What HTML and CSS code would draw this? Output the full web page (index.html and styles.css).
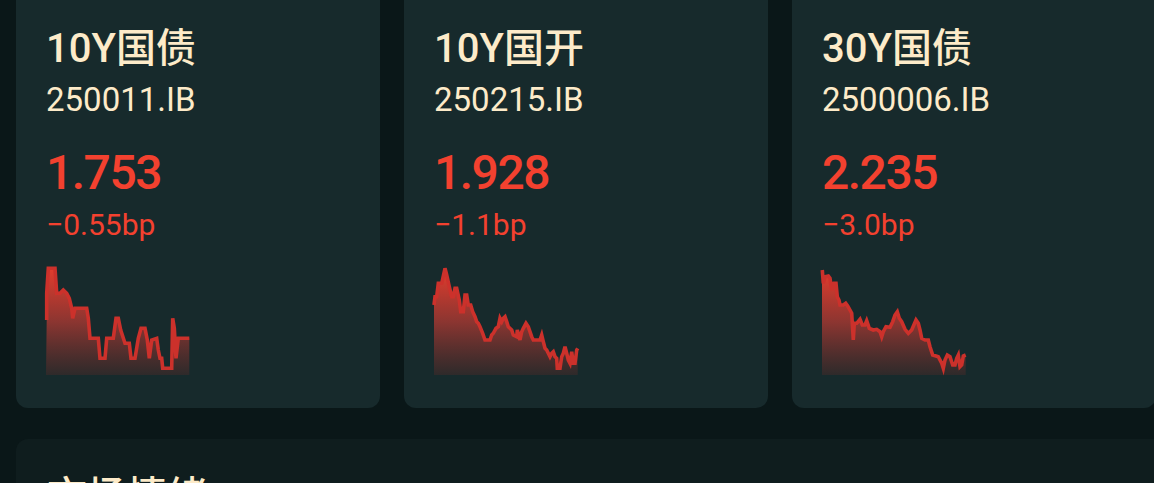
FILE: index.html
```html
<!DOCTYPE html>
<html lang="zh-CN">
<head>
<meta charset="utf-8">
<title>债券行情</title>
<link rel="stylesheet" href="styles.css">
</head>
<body>
<main class="page">
  <section class="quotes">
    <article class="card">
      <h2 class="card-title">10Y国债</h2>
      <div class="card-code">250011.IB</div>
      <div class="card-value">1.753</div>
      <div class="card-change">−0.55bp</div>
      <svg class="spark" width="144" height="110" viewBox="0 0 144 110">
        <defs>
          <linearGradient id="g1" x1="0" y1="0" x2="0" y2="1">
            <stop offset="0" stop-color="#e33c2d" stop-opacity="1"/>
            <stop offset="0.5" stop-color="#923631" stop-opacity="0.95"/>
            <stop offset="1" stop-color="#342a2a" stop-opacity="0.8"/>
          </linearGradient>
        </defs>
        <path fill="url(#g1)" d="M0.7,55 L0.7,28.3 2.3,3.3 9,3.3 10.7,28.3 14,28.3 17.3,25 20.7,28.3 23.3,33.3 25.7,43.3 26.7,53.3 29,43.3 40.7,43.3 42.3,53.3 44,73.3 52.3,73.3 54,93.3 59,93.3 60.7,73.3 67.3,73.3 70,53.3 72.3,53.3 74.7,65 79,78.3 83.3,78.3 85,93.3 89,93.3 92.3,73.3 95,63.3 99,63.3 101.3,75 103.3,93.3 105.7,75 110.7,73.3 112.3,85 114,93.3 115.7,93.3 116.7,103.3 125.7,103.3 126.7,53.3 128.3,63.3 130,93.3 132.3,73.3 143.3,73.3 143.3,85 L143.3,110 L0,110 Z"/>
        <polyline fill="none" stroke="#cc312b" stroke-width="3.6" points="0.7,55 0.7,28.3 2.3,3.3 9,3.3 10.7,28.3 14,28.3 17.3,25 20.7,28.3 23.3,33.3 25.7,43.3 26.7,53.3 29,43.3 40.7,43.3 42.3,53.3 44,73.3 52.3,73.3 54,93.3 59,93.3 60.7,73.3 67.3,73.3 70,53.3 72.3,53.3 74.7,65 79,78.3 83.3,78.3 85,93.3 89,93.3 92.3,73.3 95,63.3 99,63.3 101.3,75 103.3,93.3 105.7,75 110.7,73.3 112.3,85 114,93.3 115.7,93.3 116.7,103.3 125.7,103.3 126.7,53.3 128.3,63.3 130,93.3 132.3,73.3 143.3,73.3"/>
      </svg>
    </article>
    <article class="card">
      <h2 class="card-title">10Y国开</h2>
      <div class="card-code">250215.IB</div>
      <div class="card-value">1.928</div>
      <div class="card-change">−1.1bp</div>
      <svg class="spark" width="144" height="110" viewBox="0 0 144 110">
        <defs>
          <linearGradient id="g2" x1="0" y1="0" x2="0" y2="1">
            <stop offset="0" stop-color="#e33c2d" stop-opacity="1"/>
            <stop offset="0.5" stop-color="#923631" stop-opacity="0.95"/>
            <stop offset="1" stop-color="#342a2a" stop-opacity="0.8"/>
          </linearGradient>
        </defs>
        <path fill="url(#g2)" d="M0,40 L1,31.7 2.7,31.7 4.3,18.3 7.7,18.3 11,3.3 12.7,10 15.3,21.7 17.7,31.7 19.3,31.7 21,23.3 22.7,23.3 25.3,35 26.7,46.7 29.3,46.7 31,30 32.7,30 34.3,40 36.7,40 38.7,46.7 41,51.7 42.7,56.7 44.3,58.3 46,61.7 48.7,68.3 51,75 56,75 57.7,70 59.3,68.3 62,63.3 64.3,61.7 66,53.3 67.7,56.7 69.3,53.3 71,51.7 72.7,56.7 74.3,61.7 77.7,65 79.3,70 82.7,71.7 83.3,65 86,75 87.7,66.7 89.3,63.3 92,58.3 94.3,61.7 97.7,71.7 99.3,75 106,75 107.7,70 109.3,76.7 111,83.3 112.7,85 114.3,88.3 116,91.7 117.7,88.3 119.3,86.7 121,91.7 122.7,93.3 123.3,103.3 126,103.3 127.7,91.7 129.3,88.3 131,81.7 132.7,88.3 134.3,95 136,98.3 137.7,86.7 139.3,98.3 141,98.3 142.7,85 143.7,83.3 L143.7,110 L0,110 Z"/>
        <polyline fill="none" stroke="#cc312b" stroke-width="3.6" points="0,40 1,31.7 2.7,31.7 4.3,18.3 7.7,18.3 11,3.3 12.7,10 15.3,21.7 17.7,31.7 19.3,31.7 21,23.3 22.7,23.3 25.3,35 26.7,46.7 29.3,46.7 31,30 32.7,30 34.3,40 36.7,40 38.7,46.7 41,51.7 42.7,56.7 44.3,58.3 46,61.7 48.7,68.3 51,75 56,75 57.7,70 59.3,68.3 62,63.3 64.3,61.7 66,53.3 67.7,56.7 69.3,53.3 71,51.7 72.7,56.7 74.3,61.7 77.7,65 79.3,70 82.7,71.7 83.3,65 86,75 87.7,66.7 89.3,63.3 92,58.3 94.3,61.7 97.7,71.7 99.3,75 106,75 107.7,70 109.3,76.7 111,83.3 112.7,85 114.3,88.3 116,91.7 117.7,88.3 119.3,86.7 121,91.7 122.7,93.3 123.3,103.3 126,103.3 127.7,91.7 129.3,88.3 131,81.7 132.7,88.3 134.3,95 136,98.3 137.7,86.7 139.3,98.3 141,98.3 142.7,85 143.7,83.3"/>
      </svg>
    </article>
    <article class="card">
      <h2 class="card-title">30Y国债</h2>
      <div class="card-code">2500006.IB</div>
      <div class="card-value">2.235</div>
      <div class="card-change">−3.0bp</div>
      <svg class="spark" width="144" height="110" viewBox="0 0 144 110">
        <defs>
          <linearGradient id="g3" x1="0" y1="0" x2="0" y2="1">
            <stop offset="0" stop-color="#e33c2d" stop-opacity="1"/>
            <stop offset="0.5" stop-color="#923631" stop-opacity="0.95"/>
            <stop offset="1" stop-color="#342a2a" stop-opacity="0.8"/>
          </linearGradient>
        </defs>
        <path fill="url(#g3)" d="M0.3,5 L1.3,18.3 3,11.7 6.3,11 8,13.3 9.7,25 12,18.3 14,18.3 15.3,31.7 17,35 18,40 21.3,40 23.7,38.3 25.7,41 28,45 29.7,48.3 31.3,75 32.3,58.3 34.7,58.3 38,54.3 40.3,60 43,60 44.7,55.7 47.3,63.3 51.3,65 54.7,64.3 58,66.7 59.7,71.7 61.3,66.7 64,61.7 68,62.3 70.7,56.7 73,50 75.3,46.7 77.3,53.3 79.7,56.7 83,64.3 86.3,68.3 89.7,65 94,55 96.3,58.3 98,65 99.7,73.3 103,75 106.3,75 108,81.7 110.7,90 114,91 116.3,91.7 119.7,98.3 121.3,103.3 123,95 125.3,90 128,91.7 130.7,100 133,100 134.7,93.3 136.3,90 138,101.7 139.7,100 141.3,91 143.7,90 L143.7,110 L0,110 L0,5 Z"/>
        <polyline fill="none" stroke="#cc312b" stroke-width="3.6" points="0.3,5 1.3,18.3 3,11.7 6.3,11 8,13.3 9.7,25 12,18.3 14,18.3 15.3,31.7 17,35 18,40 21.3,40 23.7,38.3 25.7,41 28,45 29.7,48.3 31.3,75 32.3,58.3 34.7,58.3 38,54.3 40.3,60 43,60 44.7,55.7 47.3,63.3 51.3,65 54.7,64.3 58,66.7 59.7,71.7 61.3,66.7 64,61.7 68,62.3 70.7,56.7 73,50 75.3,46.7 77.3,53.3 79.7,56.7 83,64.3 86.3,68.3 89.7,65 94,55 96.3,58.3 98,65 99.7,73.3 103,75 106.3,75 108,81.7 110.7,90 114,91 116.3,91.7 119.7,98.3 121.3,103.3 123,95 125.3,90 128,91.7 130.7,100 133,100 134.7,93.3 136.3,90 138,101.7 139.7,100 141.3,91 143.7,90"/>
      </svg>
    </article>
  </section>
  <section class="panel">
    <h2 class="panel-title">市场情绪</h2>
  </section>
</main>
</body>
</html>
```

FILE: styles.css
```css
html, body {
  margin: 0;
  padding: 0;
  background: #0a1718;
  overflow: hidden;
}

body {
  font-family: Roboto, "Noto Sans CJK SC", sans-serif;
  color: #fdebc9;
}

.page {
  margin-top: -20px;
  padding: 0 0 0 16px;
  display: flex;
  flex-direction: column;
  gap: 31px;
}

.quotes {
  display: flex;
  gap: 24px;
}

.card {
  flex: 0 0 364px;
  box-sizing: border-box;
  background: #172a2c;
  border-radius: 12px;
  padding: 46px 30px 33px 30px;
  display: flex;
  flex-direction: column;
}

.card-title {
  margin: 0;
  font-size: 40px;
  line-height: 46px;
  font-weight: 500;
}

.card-code {
  margin-top: 8px;
  font-size: 33px;
  line-height: 40px;
  font-weight: 400;
}

.card-value {
  margin-top: 25px;
  font-size: 48px;
  line-height: 56px;
  font-weight: 500;
  letter-spacing: -1.5px;
  color: #f3412f;
}

.card-change {
  margin-top: 6px;
  font-size: 30px;
  line-height: 36px;
  color: #f3412f;
}

.spark {
  display: block;
  margin-top: 22px;
  overflow: visible;
}

.panel {
  width: 1200px;
  background: #0f1d1e;
  border-radius: 12px;
  padding: 35px 31px 40px;
}

.panel-title {
  margin: 0;
  font-size: 40px;
  line-height: 46px;
  font-weight: 500;
}
```
